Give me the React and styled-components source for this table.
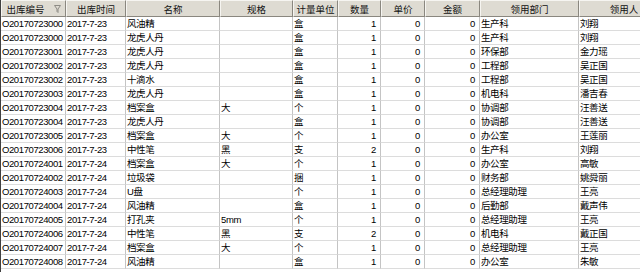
import React from 'react'
import styled, { createGlobalStyle } from 'styled-components'

const GlobalStyle = createGlobalStyle`
  html, body {
    margin: 0;
    padding: 0;
    background: #ffffff;
  }
  body {
    font-family: 'Liberation Sans', 'Noto Sans CJK SC', sans-serif;
    font-size: 9.5px;
    color: #000;
  }
`

const columns = [
  { title: '出库编号', width: 65, filter: true },
  { title: '出库时间', width: 60 },
  { title: '名称', width: 94 },
  { title: '规格', width: 73 },
  { title: '计量单位', width: 45 },
  { title: '数量', width: 43, right: true },
  { title: '单价', width: 44, right: true },
  { title: '金额', width: 55, right: true },
  { title: '领用部门', width: 99 },
  { title: '领用人', width: 90 },
]

const rows = [
  ['O20170723000', '2017-7-23', '风油精', '', '盒', '1', '0', '0', '生产科', '刘翔'],
  ['O20170723000', '2017-7-23', '龙虎人丹', '', '盒', '1', '0', '0', '生产科', '刘翔'],
  ['O20170723001', '2017-7-23', '龙虎人丹', '', '盒', '1', '0', '0', '环保部', '金力瑶'],
  ['O20170723002', '2017-7-23', '龙虎人丹', '', '盒', '1', '0', '0', '工程部', '吴正国'],
  ['O20170723002', '2017-7-23', '十滴水', '', '盒', '1', '0', '0', '工程部', '吴正国'],
  ['O20170723003', '2017-7-23', '龙虎人丹', '', '盒', '1', '0', '0', '机电科', '潘吉春'],
  ['O20170723004', '2017-7-23', '档案盒', '大', '个', '1', '0', '0', '协调部', '汪善送'],
  ['O20170723004', '2017-7-23', '龙虎人丹', '', '盒', '1', '0', '0', '协调部', '汪善送'],
  ['O20170723005', '2017-7-23', '档案盒', '大', '个', '1', '0', '0', '办公室', '王莲丽'],
  ['O20170723006', '2017-7-23', '中性笔', '黑', '支', '2', '0', '0', '生产科', '刘翔'],
  ['O20170724001', '2017-7-24', '档案盒', '大', '个', '1', '0', '0', '办公室', '高敏'],
  ['O20170724002', '2017-7-24', '垃圾袋', '', '捆', '1', '0', '0', '财务部', '姚舜丽'],
  ['O20170724003', '2017-7-24', 'U盘', '', '个', '1', '0', '0', '总经理助理', '王亮'],
  ['O20170724004', '2017-7-24', '风油精', '', '盒', '1', '0', '0', '后勤部', '戴声伟'],
  ['O20170724005', '2017-7-24', '打孔夹', '5mm', '个', '1', '0', '0', '总经理助理', '王亮'],
  ['O20170724006', '2017-7-24', '中性笔', '黑', '支', '2', '0', '0', '机电科', '戴正国'],
  ['O20170724007', '2017-7-24', '档案盒', '大', '个', '1', '0', '0', '总经理助理', '王亮'],
  ['O20170724008', '2017-7-24', '风油精', '', '盒', '1', '0', '0', '办公室', '朱敏'],
]

const template = columns.map(c => `${c.width}px`).join(' ')

const Sheet = styled.div`
  width: 640px;
  height: 272px;
  overflow: hidden;
  border-left: 1px solid #404040;
  box-sizing: border-box;
`

const Row = styled.div`
  display: grid;
  grid-template-columns: ${template};
  width: max-content;
`

const HeadCell = styled.div`
  box-sizing: border-box;
  height: 17px;
  display: flex;
  align-items: center;
  justify-content: center;
  gap: 9px;
  padding-top: 1px;
  background: #dedbd2;
  border-top: 1px solid #f6f5f1;
  border-left: 1px solid #f6f5f1;
  border-right: 1px solid #8a877f;
  border-bottom: 1px solid #8a877f;
  font-size: 9.5px;
  color: #111;
  white-space: nowrap;
`

const Cell = styled.div`
  box-sizing: border-box;
  height: 14px;
  line-height: 13px;
  padding: 0 ${p => (p.$right ? '4px' : '1px')};
  text-align: ${p => (p.$right ? 'right' : 'left')};
  letter-spacing: -0.4px;
  border-right: 1px solid #c4c4c4;
  border-bottom: 1px solid #dcdcdc;
  white-space: nowrap;
  overflow: hidden;
  background: #fff;
`

const FilterIcon = () => (
  <svg width="7" height="8" viewBox="0 0 7 8">
    <path d="M0.5 0.5 H6.5 L4 4 V7.5 L3 6.5 V4 Z" fill="none" stroke="#8c8a84" strokeWidth="1" />
  </svg>
)

export default function App() {
  return (
    <>
      <GlobalStyle />
      <Sheet>
        <Row>
          {columns.map(c => (
            <HeadCell key={c.title}>
              <span>{c.title}</span>
              {c.filter && <FilterIcon />}
            </HeadCell>
          ))}
        </Row>
        {rows.map((r, i) => (
          <Row key={i}>
            {r.map((v, j) => (
              <Cell key={j} $right={columns[j].right}>
                {v}
              </Cell>
            ))}
          </Row>
        ))}
      </Sheet>
    </>
  )
}
